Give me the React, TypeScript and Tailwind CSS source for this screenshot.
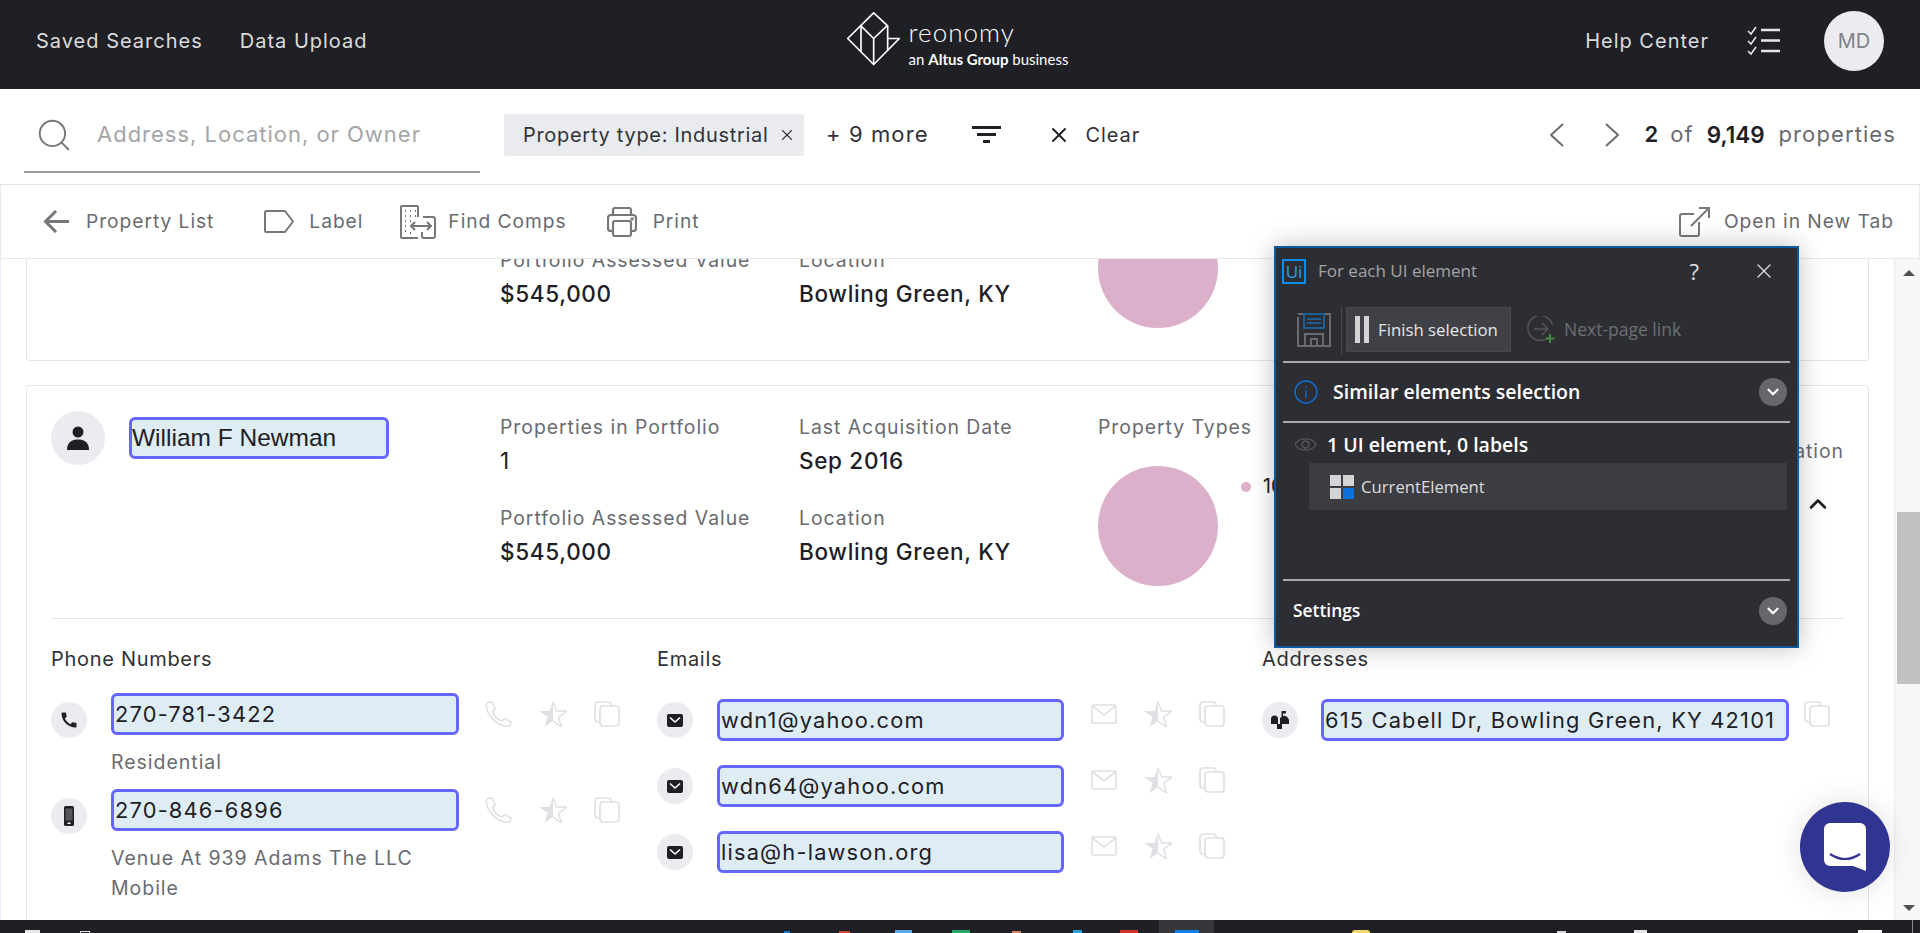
import { ChevronDown, ChevronUp, Search, X } from "lucide-react";
import { MdCall } from "react-icons/md";

const SANS = "font-['Inter','Liberation_Sans',sans-serif]";

// ── Small drawn icons ──
function ReonomyLogo() {
  return (
    <svg className="mb-[5px]" width="55" height="57" viewBox="45 30 165 170" fill="none" stroke="white" strokeWidth="5" strokeLinejoin="round">
      <path d="M128 38 L50 115 L128 193 L205 115 H170 V77 Z" />
      <path d="M90 77 L128 115 L168 77 M128 115 V193 M90 77 V153 M170 115 V150" />
    </svg>
  );
}

function ChecklistIcon() {
  return (
    <svg width="34" height="30" viewBox="0 0 34 30" fill="none" stroke="#e6e6e6" strokeWidth="1.6">
      <path d="M1 5 L4 8 L9 1 M1 15 L4 18 L9 11 M1 25 L4 28 L9 21" />
      <path d="M14 4 H33 M14 14.500 H33 M14 25 H33" strokeWidth="2.4" />
    </svg>
  );
}

function FilterIcon() {
  return (
    <svg width="29" height="17" viewBox="0 0 29 17" fill="#1e2026">
      <rect x="0" y="0" width="29" height="3" />
      <rect x="5" y="7" width="19" height="3" />
      <rect x="11" y="14" width="7" height="3" />
    </svg>
  );
}

function PagerChevron({ flip }: { flip?: boolean }) {
  return (
    <svg width="14" height="24" viewBox="0 0 14 24" fill="none" stroke="#6b6d71" strokeWidth="2">
      <path d={flip ? "M1 1 L13 12 L1 23" : "M13 1 L1 12 L13 23"} />
    </svg>
  );
}

function BackArrow() {
  return (
    <svg width="26" height="23" viewBox="0 0 26 23" fill="none" stroke="#75777b" strokeWidth="3">
      <path d="M26 11.500 H3 M13 1 L2.500 11.500 L13 22" />
    </svg>
  );
}

function LabelIcon() {
  return (
    <svg width="30" height="23" viewBox="0 0 30 23" fill="none" stroke="#75777b" strokeWidth="2" strokeLinejoin="round">
      <path d="M2.500 1 H21 L29 11.500 L21 22 H2.500 A1.500 1.500 0 0 1 1 20.500 V2.500 A1.500 1.500 0 0 1 2.500 1 Z" />
    </svg>
  );
}

function CompsIcon() {
  return (
    <svg width="36" height="34" viewBox="0 0 36 34" fill="none" stroke="#75777b" strokeWidth="2">
      <path d="M1 2 A1 1 0 0 1 2 1 H17 A1 1 0 0 1 18 2 V12 M1 2 V32 A1 1 0 0 0 2 33 H18" />
      <path d="M23 12 H33 A2 2 0 0 1 35 14 V31 A2 2 0 0 1 33 33 H24 A2 2 0 0 1 22 31 V27" />
      <path d="M5 6 h1 M10 6 h1 M15 6 h1 M5 11 h1 M10 11 h1 M15 11 h1 M5 16 h1 M10 16 h1 M5 21 h1 M5 26 h1 M10 28 h1" strokeWidth="2" />
      <path d="M12 21 H30 M15 17 L11 21 L15 25 M27 17 L31 21 L27 25" />
    </svg>
  );
}

function PrintIcon() {
  return (
    <svg width="30" height="30" viewBox="0 0 30 30" fill="none" stroke="#75777b" strokeWidth="2.200">
      <path d="M6 8 V3 A2 2 0 0 1 8 1 H22 A2 2 0 0 1 24 3 V8" />
      <path d="M6 24 H4 A3 3 0 0 1 1 21 V11 A3 3 0 0 1 4 8 H26 A3 3 0 0 1 29 11 V21 A3 3 0 0 1 26 24 H24" />
      <rect x="6" y="14" width="18" height="15" rx="2" />
      <circle cx="25" cy="12" r="0.700" fill="#75777b" />
    </svg>
  );
}

function OpenTabIcon() {
  return (
    <svg width="31" height="30" viewBox="0 0 31 30" fill="none" stroke="#75777b" strokeWidth="2">
      <path d="M15 7 H3 A2 2 0 0 0 1 9 V27 A2 2 0 0 0 3 29 H18 A2 2 0 0 0 20 27 V15" />
      <path d="M12 19 L29 2 M20 1 H30 V11" />
    </svg>
  );
}

function UserIcon() {
  return (
    <svg width="22" height="24" viewBox="0 0 22 24" fill="#1e2026">
      <circle cx="11" cy="6" r="5.500" />
      <path d="M0 24 C0 16 5 13.500 11 13.500 C17 13.500 22 16 22 24 Z" />
    </svg>
  );
}

function MobileIcon() {
  return (
    <svg width="10" height="20" viewBox="0 0 10 20">
      <rect width="10" height="20" rx="1.500" fill="#1e2026" />
      <rect x="1.500" y="2.500" width="7" height="12" fill="#55575c" />
      <rect x="3.500" y="16.500" width="3" height="1.500" fill="white" />
    </svg>
  );
}

function MailSolidIcon() {
  return (
    <svg width="16" height="13" viewBox="0 0 16 13">
      <rect width="16" height="13" rx="2" fill="#1e2026" />
      <path d="M3 3.500 L8 8 L13 3.500" fill="none" stroke="white" strokeWidth="1.600" />
    </svg>
  );
}

function MailboxIcon() {
  return (
    <svg width="18" height="18" viewBox="0 0 18 18" fill="#1e2026">
      <path d="M0 8 A3.500 3.500 0 0 1 7 8 V13 H0 Z" />
      <path d="M9 6.500 H10.500 V0 H15 V2.500 H12 V5 A5 5 0 0 1 18 9 V13 H9 Z" />
      <rect x="6" y="13" width="5" height="5" />
    </svg>
  );
}

function PhoneOutlineIcon() {
  return (
    <svg width="27" height="26" viewBox="0 0 27 26" fill="none" stroke="#dfe0e4" strokeWidth="1.600" strokeLinejoin="round">
      <path d="M3 1.500 L7 1 L10 8 L7.500 10.500 C9 15 12 18.500 17 20 L19.500 17.500 L26 21 L25 24.500 C24 25.500 21 25.500 18 24.500 C9 21.500 3 14 1.500 7 C1 4.500 1.500 2.500 3 1.500 Z" />
    </svg>
  );
}

function HalfStarIcon() {
  return (
    <svg width="28" height="26" viewBox="0 0 28 26">
      <path d="M14 0 L14 20 L5.500 26 L8.500 16 L0 10 H10.500 Z" fill="#dfe0e4" />
      <path d="M14 1 L17.500 10 H28 L19.500 16 L22.500 26 L14 20" fill="none" stroke="#dfe0e4" strokeWidth="1.500" />
    </svg>
  );
}

function CopyIcon() {
  return (
    <svg width="26" height="26" viewBox="0 0 26 26" fill="none" stroke="#dfe0e4" strokeWidth="1.700">
      <path d="M5 21 H4 A3 3 0 0 1 1 18 V4 A3 3 0 0 1 4 1 H14 A3 3 0 0 1 17 4" />
      <rect x="6" y="5" width="19" height="20" rx="3" fill="white" />
    </svg>
  );
}

function MailOutlineIcon() {
  return (
    <svg width="26" height="20" viewBox="0 0 26 20" fill="none" stroke="#dfe0e4" strokeWidth="1.600">
      <rect x="1" y="1" width="24" height="18" rx="1" />
      <path d="M1.500 2 L13 11 L24.500 2" />
    </svg>
  );
}

// ── Shared bits ──
function RoundIcon({ size, className, children }: { size: string; className: string; children: React.ReactNode }) {
  return (
    <div className={`${size} ${className} shrink-0 rounded-full bg-[#ebecf0] flex items-center justify-center`}>
      {children}
    </div>
  );
}

function Highlight({ className, text, font }: { className: string; text: string; font?: string }) {
  return (
    <div className={`${className} h-[42px] shrink-0 flex items-center bg-[#deecf4] border-[3px] border-[#6666ff] rounded-md text-[#1e2026] whitespace-nowrap ${font ?? "pl-[1px] text-[21.800px] tracking-[0.055em]"}`}>
      {text}
    </div>
  );
}

function Stat({ label, value, medium }: { label: string; value: string; medium?: boolean }) {
  return (
    <div>
      <div className="h-[24px] leading-[24px] text-[19.400px] tracking-[0.05em] text-[#696b6f] whitespace-nowrap">{label}</div>
      <div className={`mt-[6px] h-[32px] leading-[32px] text-[22.500px] tracking-[0.03em] text-[#1e2026] whitespace-nowrap ${medium ? "font-medium" : ""}`}>{value}</div>
    </div>
  );
}

// ── Summary row of an owner card ──
function OwnerSummary() {
  return (
    <div className="flex h-[207px]">
      <div className="w-[449px] shrink-0 flex items-start">
        <RoundIcon size="w-[54px] h-[54px]" className="">
          <UserIcon />
        </RoundIcon>
        <Highlight className="w-[260px] ml-[24px] mt-[6px]" text="William F Newman" font="font-['Liberation_Sans',sans-serif] text-[24.500px]" />
      </div>
      <div className="w-[299px] shrink-0 flex flex-col gap-[29px] pt-[4px]">
        <Stat label="Properties in Portfolio" value="1" />
        <Stat label="Portfolio Assessed Value" value="$545,000" medium />
      </div>
      <div className="w-[299px] shrink-0 flex flex-col gap-[29px] pt-[4px]">
        <Stat label="Last Acquisition Date" value="Sep 2016" medium />
        <Stat label="Location" value="Bowling Green, KY" medium />
      </div>
      <div className="w-[500px] shrink-0 pt-[4px]">
        <div className="h-[24px] leading-[24px] text-[19.400px] tracking-[0.05em] text-[#696b6f]">Property Types</div>
        <div className="mt-[27px] flex items-start">
          <div className="w-[120px] h-[120px] rounded-full bg-[#dcb0ca]" />
          <div className="ml-[23px] mt-[6px] flex items-center gap-[12px] text-[19.400px] text-[#1e2026]">
            <span className="w-[10px] h-[10px] rounded-full bg-[#dcb0ca]" />
            100% Industrial
          </div>
        </div>
      </div>
      <div className="flex-1 flex flex-col items-end pt-[28px]">
        <div className="h-[24px] leading-[24px] text-[19.400px] tracking-[0.05em] text-[#696b6f] whitespace-nowrap">Location</div>
        <ChevronUp className="mt-[27px] mr-[12px] text-[#1e2026]" size={28} strokeWidth={2.200} />
      </div>
    </div>
  );
}

function Actions({ icons, className }: { icons: "phone" | "mail"; className: string }) {
  return (
    <div className={`flex items-start ${className}`}>
      {icons === "phone" ? <PhoneOutlineIcon /> : <div className="pt-[3px]"><MailOutlineIcon /></div>}
      <div className="ml-[27px]"><HalfStarIcon /></div>
      <div className="ml-[27px]"><CopyIcon /></div>
    </div>
  );
}

function SectionTitle({ children }: { children: string }) {
  return <div className="h-[24px] leading-[24px] text-[20px] tracking-[0.035em] text-[#303236]">{children}</div>;
}

function ContactDetails() {
  const emails = ["wdn1@yahoo.com", "wdn64@yahoo.com", "lisa@h-lawson.org"];
  return (
    <div className="border-t border-[#e4e5e8] pt-[28px] grid grid-cols-[606px_605px_1fr]">
      <div>
        <SectionTitle>Phone Numbers</SectionTitle>
        <div className="mt-[22px] flex flex-col gap-[12px]">
          <div className="flex items-start">
            <RoundIcon size="w-[36px] h-[36px]" className="mt-[9px]"><MdCall size={20} color="#1e2026" /></RoundIcon>
            <div className="ml-[24px]">
              <Highlight className="w-[348px]" text="270-781-3422" />
              <div className="mt-[12px] h-[30px] leading-[30px] text-[19.500px] tracking-[0.05em] text-[#696b6f]">Residential</div>
            </div>
            <Actions icons="phone" className="ml-[26px] mt-[8px]" />
          </div>
          <div className="flex items-start">
            <RoundIcon size="w-[36px] h-[36px]" className="mt-[9px]"><MobileIcon /></RoundIcon>
            <div className="ml-[24px]">
              <Highlight className="w-[348px]" text="270-846-6896" />
              <div className="mt-[12px] leading-[30px] text-[19.500px] tracking-[0.05em] text-[#696b6f]">
                Venue At 939 Adams The LLC
                <br />
                Mobile
              </div>
            </div>
            <Actions icons="phone" className="ml-[26px] mt-[8px]" />
          </div>
        </div>
      </div>

      <div>
        <SectionTitle>Emails</SectionTitle>
        <div className="mt-[28px] flex flex-col gap-[24px]">
          {emails.map((email) => (
            <div key={email} className="flex items-start">
              <RoundIcon size="w-[36px] h-[36px]" className="mt-[3px]"><MailSolidIcon /></RoundIcon>
              <Highlight className="w-[347px] ml-[24px]" text={email} />
              <Actions icons="mail" className="ml-[27px] mt-[2px]" />
            </div>
          ))}
        </div>
      </div>

      <div>
        <SectionTitle>Addresses</SectionTitle>
        <div className="mt-[28px] flex items-start">
          <RoundIcon size="w-[36px] h-[36px]" className="mt-[3px]"><MailboxIcon /></RoundIcon>
          <Highlight className="w-[468px] ml-[23px]" text="615 Cabell Dr, Bowling Green, KY 42101" />
          <div className="ml-[15px] mt-[2px]"><CopyIcon /></div>
        </div>
      </div>
    </div>
  );
}

// ── UiPath selection panel ──
function SelectionPanel() {
  const CHEVRON = "w-[28px] h-[28px] rounded-full bg-[#67686b] flex items-center justify-center";
  return (
    <div className="absolute left-[1274px] top-[246px] w-[525px] h-[402px] bg-[#2d2e33] border-2 border-[#0f5a9c] shadow-[0_0_24px_rgba(0,0,0,0.25)] flex flex-col font-['Open_Sans',sans-serif]">
      <div className="h-[50px] flex items-center pl-[6px] pr-[21px] pb-[4px] shrink-0">
        <div className="w-[24px] h-[25px] border-2 border-[#0d8de8] flex items-center justify-center text-[17px] leading-none text-[#2d9cf0]">Ui</div>
        <span className="ml-[12px] text-[17px] text-[#a3a4a6]">For each UI element</span>
        <span className="ml-auto text-[22px] text-[#e0e0e0]">?</span>
        <X className="ml-[53px] text-[#e0e0e0]" size={24} strokeWidth={1.300} />
      </div>
      <div className="mx-[7px] h-[65px] shrink-0 flex items-center border-b-2 border-[#a9aaac]">
        <svg className="ml-[14px]" width="34" height="34" viewBox="0 0 34 34" fill="none" stroke="#6a6b6e" strokeWidth="2">
          <path d="M1 1 H33 V33 H1 V4" />
          <rect x="7" y="1" width="20" height="14" stroke="#1d5f92" />
          <path d="M10 6 H24 M10 10 H24" stroke="#1d5f92" />
          <path d="M8 33 V21 H26 V33 M14 33 V26 H20 V33" />
        </svg>
        <div className="ml-[10px] w-[1px] h-[48px] bg-[#4a4b4f]" />
        <div className="ml-[4px] w-[165px] h-[45px] bg-[#3f4146] border border-[#47494e] flex items-center pl-[8px] shrink-0">
          <span className="w-[5px] h-[27px] bg-[#d4d4d4]" />
          <span className="ml-[4px] w-[5px] h-[27px] bg-[#d4d4d4]" />
          <span className="ml-[9px] text-[16.800px] text-[#e6e6e6] whitespace-nowrap">Finish selection</span>
        </div>
        <svg className="ml-[16px]" width="28" height="28" viewBox="0 0 28 28" fill="none" stroke="#55575a" strokeWidth="1.400">
          <path d="M22 21 A12.500 12.500 0 1 1 25.500 9" />
          <path d="M7 13 H20 M15 7 L21 13 L15 19" />
          <path d="M23 18 V27 M18.500 22.500 H27.500" stroke="#3f8b3f" strokeWidth="2" />
        </svg>
        <span className="ml-[9px] text-[17.500px] text-[#6e6f72] whitespace-nowrap">Next-page link</span>
      </div>
      <div className="mx-[7px] h-[60px] shrink-0 flex items-center border-b-2 border-[#a9aaac] pl-[11px] pr-[3px] pb-[1px]">
        <svg width="24" height="24" viewBox="0 0 24 24" fill="none" stroke="#0b6fdc" strokeWidth="1.300">
          <circle cx="12" cy="12" r="11" />
          <path d="M12 10 V18 M12 6 V7.500" />
        </svg>
        <span className="ml-[15px] text-[19.500px] font-semibold text-white whitespace-nowrap">Similar elements selection</span>
        <div className={`ml-auto ${CHEVRON}`}><ChevronDown size={18} strokeWidth={3} color="white" /></div>
      </div>
      <div className="flex-1 mx-[7px] border-b-2 border-[#a9aaac]">
        <div className="h-[40px] flex items-center pl-[11px] pt-[3px]">
          <svg width="23" height="17" viewBox="0 0 23 17" fill="none" stroke="#55575a" strokeWidth="1.400">
            <path d="M1 8.500 C5 1 18 1 22 8.500 C18 16 5 16 1 8.500 Z" />
            <circle cx="11.500" cy="8.500" r="3.500" />
          </svg>
          <span className="ml-[10px] text-[19.500px] font-semibold text-white whitespace-nowrap">1 UI element, 0 labels</span>
        </div>
        <div className="ml-[26px] mr-[3px] h-[47px] bg-[#3c3d43] flex items-center pl-[21px]">
          <div className="grid grid-cols-2 gap-[2px] w-[24px] h-[24px]">
            <span className="bg-[#d4d4d4]" />
            <span className="bg-[#d4d4d4]" />
            <span className="bg-[#d4d4d4]" />
            <span className="bg-[#0b6fdc]" />
          </div>
          <span className="ml-[7px] text-[16.700px] text-[#dcdcdc]">CurrentElement</span>
        </div>
      </div>
      <div className="mx-[7px] h-[65px] shrink-0 flex items-center pl-[10px] pr-[3px] pb-[6px]">
        <span className="text-[17.400px] font-semibold text-white">Settings</span>
        <div className={`ml-auto ${CHEVRON}`}><ChevronDown size={18} strokeWidth={3} color="white" /></div>
      </div>
    </div>
  );
}

// ── Bottom sliver of the window's task bar ──
function TaskBar() {
  return (
    <div className="h-[13px] shrink-0 bg-[#1e2026] flex items-end">
      <span className="ml-[25px] w-[15px] h-[3px] bg-[#e8e8e8]" />
      <span className="ml-[40px] w-[10px] h-[2px] border-t border-x border-[#e8e8e8]" />
      <span className="ml-[694px] w-[6px] h-[2px] bg-[#1976c8]" />
      <span className="ml-[49px] w-[11px] h-[2px] bg-[#c8452f]" />
      <span className="ml-[45px] w-[17px] h-[3px] bg-[#59a9e5]" />
      <span className="ml-[40px] w-[18px] h-[3px] bg-[#27a566]" />
      <span className="ml-[42px] w-[9px] h-[2px] bg-[#d98066]" />
      <span className="ml-[52px] w-[9px] h-[3px] bg-[#2a9fd6]" />
      <span className="ml-[38px] w-[18px] h-[3px] bg-[#d32f2f]" />
      <div className="ml-[21px] w-[55px] h-[13px] bg-[#35373b] flex items-end justify-center">
        <span className="w-[24px] h-[3px] bg-[#1382e8]" />
      </div>
      <span className="ml-[138px] w-[18px] h-[3px] rounded-t-full bg-[#f3d774]" />
      <span className="ml-[187px] w-[9px] h-[2px] bg-[#d8d8d8]" />
      <span className="ml-[68px] w-[13px] h-[3px] bg-[#e4e4e4]" />
      <span className="ml-[211px] w-[24px] h-[3px] bg-white" />
      <span className="ml-[30px] w-[1px] h-[13px] bg-[#8a8a8a]" />
    </div>
  );
}

export default function App() {
  return (
    <div className={`relative w-[1920px] h-[933px] overflow-hidden bg-white flex flex-col ${SANS}`}>
      {/* ── Top nav ── */}
      <header className="h-[89px] shrink-0 bg-[#1e2026] grid grid-cols-[1fr_auto_1fr] items-center pl-[36px] pr-[36px] pb-[7px]">
        <nav className="flex gap-[37px] text-[20px] tracking-[0.05em] text-[#dcdcdc]">
          <span>Saved Searches</span>
          <span>Data Upload</span>
        </nav>
        <div className="flex items-center gap-[8px] -ml-[6px]">
          <ReonomyLogo />
          <div className="mt-[5px] font-['Lato',sans-serif] text-white">
            <div className="text-[26px] leading-[28px] font-light tracking-[0.04em]">reonomy</div>
            <div className="text-[15px] leading-[20px] mt-[3px]">
              an <b>Altus Group</b> business
            </div>
          </div>
        </div>
        <div className="flex items-center justify-end text-[20px] tracking-[0.05em] text-[#dcdcdc]">
          <span>Help Center</span>
          <div className="ml-[38px]"><ChecklistIcon /></div>
          <div className="ml-[43px] w-[60px] h-[60px] rounded-full bg-[#ebecf0] flex items-center justify-center text-[20px] tracking-normal text-[#808287]">MD</div>
        </div>
      </header>

      {/* ── Search row ── */}
      <div className="h-[96px] shrink-0 border-b border-[#e2e3e6] flex items-center pl-[24px] pr-[24px] pb-[4px]">
        <div className="w-[456px] h-[72px] mt-[5px] border-b-2 border-[#9a9b9e] flex items-center pl-[11px] pb-[3px] shrink-0">
          <Search size={38} strokeWidth={1.200} className="text-[#75777b]" />
          <span className="ml-[24px] text-[22px] tracking-[0.045em] text-[#a4a5a8] whitespace-nowrap">Address, Location, or Owner</span>
        </div>
        <div className="ml-[24px] w-[300px] h-[42px] rounded-[3px] bg-[#e9ebef] flex items-center pl-[19px] text-[20px] tracking-[0.035em] text-[#303236] shrink-0 whitespace-nowrap">
          Property type: Industrial
          <X size={18} strokeWidth={1.500} className="ml-[9px]" />
        </div>
        <span className="ml-[22px] text-[22px] tracking-[0.05em] text-[#303236] whitespace-nowrap">+ 9 more</span>
        <div className="ml-[43px]"><FilterIcon /></div>
        <X size={24} strokeWidth={2} className="ml-[46px] text-[#1e2026]" />
        <span className="ml-[15px] text-[20px] tracking-[0.045em] text-[#303236]">Clear</span>
        <div className="ml-auto flex items-center">
          <PagerChevron />
          <div className="ml-[41px]"><PagerChevron flip /></div>
          <span className="ml-[25px] text-[22px] font-semibold text-[#1e2026]">2</span>
          <span className="ml-[12px] text-[22px] tracking-[0.05em] text-[#696b6f]">of</span>
          <span className="ml-[13px] text-[22.500px] font-semibold text-[#1e2026]">9,149</span>
          <span className="ml-[14px] text-[22px] tracking-[0.05em] text-[#696b6f]">properties</span>
        </div>
      </div>

      {/* ── Toolbar ── */}
      <div className="h-[74px] shrink-0 border-b border-x border-[#e8e9ec] flex items-center pl-[42px] pr-[25px] text-[19.200px] tracking-[0.05em] text-[#696b6f]">
        <BackArrow />
        <span className="ml-[17px]">Property List</span>
        <div className="ml-[50px]"><LabelIcon /></div>
        <span className="ml-[15px]">Label</span>
        <div className="ml-[37px]"><CompsIcon /></div>
        <span className="ml-[12px]">Find Comps</span>
        <div className="ml-[40px]"><PrintIcon /></div>
        <span className="ml-[16px]">Print</span>
        <div className="ml-auto"><OpenTabIcon /></div>
        <span className="ml-[14px]">Open in New Tab</span>
      </div>

      {/* ── Scrolled content ── */}
      <main className="flex-1 min-h-0 flex">
        <div className="flex-1 overflow-hidden pl-[25px] pr-[25px] border-l border-[#eeeeff]">
          <div className="-mt-[133px] flex flex-col gap-[24px]">
            <section className="border border-[#e4e5e8] rounded-[3px] pt-[26px] px-[24px]">
              <OwnerSummary />
            </section>
            <section className="border border-[#e4e5e8] rounded-[3px] pt-[25px] px-[24px] pb-[40px]">
              <OwnerSummary />
              <ContactDetails />
            </section>
          </div>
        </div>
        {/* scrollbar */}
        <div className="w-[26px] shrink-0 border-l border-[#ececec] bg-[#f8f8f8] flex flex-col items-end">
          <div className="w-full h-[26px] flex items-center justify-center pt-[2px] pl-[2px]">
            <span className="w-0 h-0 border-x-[6px] border-x-transparent border-b-[6px] border-b-[#505050]" />
          </div>
          <div className="mt-[227px] w-[23px] h-[172px] bg-[#c1c1c1]" />
          <div className="mt-auto w-full h-[24px] flex items-center justify-center pl-[2px]">
            <span className="w-0 h-0 border-x-[6px] border-x-transparent border-t-[6px] border-t-[#505050]" />
          </div>
        </div>
      </main>

      <TaskBar />

      <SelectionPanel />

      {/* ── Chat launcher ── */}
      <button className="absolute left-[1800px] top-[802px] w-[90px] h-[90px] rounded-full bg-[#2f3590] shadow-[0_0_30px_rgba(0,0,0,0.12)] flex items-center justify-center">
        <svg width="42" height="48" viewBox="0 0 42 48">
          <path d="M6 0 H36 A6 6 0 0 1 42 6 V48 L29 43 H6 A6 6 0 0 1 0 37 V6 A6 6 0 0 1 6 0 Z" fill="white" />
          <path d="M6 31 Q21 41 36 31" fill="none" stroke="#2f3590" strokeWidth="2.200" />
        </svg>
      </button>
    </div>
  );
}
